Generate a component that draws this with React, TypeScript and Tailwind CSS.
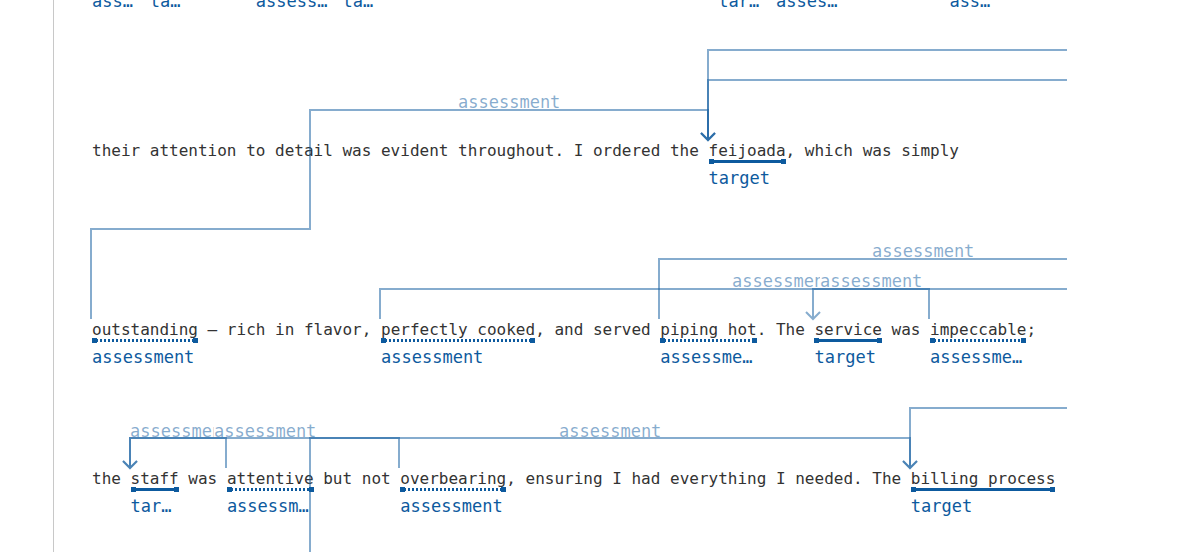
import React from 'react'

type Kind = 'target' | 'assessment'
type Span = { at: number; len: number; kind: Kind }

// text rows, span offsets are in characters of the monospaced line
const ROWS: { text: string; spans: Span[]; gap: string }[] = [
  {
    // line above the fold, only its labels show
    text: ' '.repeat(94),
    gap: '-mt-[36px]',
    spans: [
      { at: 0, len: 5, kind: 'assessment' },
      { at: 6, len: 4, kind: 'target' },
      { at: 17, len: 8, kind: 'assessment' },
      { at: 26, len: 4, kind: 'target' },
      { at: 65, len: 5, kind: 'target' },
      { at: 71, len: 7, kind: 'assessment' },
      { at: 89, len: 5, kind: 'assessment' },
    ],
  },
  {
    text: 'their attention to detail was evident throughout. I ordered the feijoada, which was simply',
    gap: 'mt-[127px]',
    spans: [{ at: 64, len: 8, kind: 'target' }],
  },
  {
    text: 'outstanding — rich in flavor, perfectly cooked, and served piping hot. The service was impeccable;',
    gap: 'mt-[129px]',
    spans: [
      { at: 0, len: 11, kind: 'assessment' },
      { at: 30, len: 16, kind: 'assessment' },
      { at: 59, len: 10, kind: 'assessment' },
      { at: 75, len: 7, kind: 'target' },
      { at: 87, len: 10, kind: 'assessment' },
    ],
  },
  {
    text: 'the staff was attentive but not overbearing, ensuring I had everything I needed. The billing process',
    gap: 'mt-[99px]',
    spans: [
      { at: 4, len: 5, kind: 'target' },
      { at: 14, len: 9, kind: 'assessment' },
      { at: 32, len: 11, kind: 'assessment' },
      { at: 85, len: 15, kind: 'target' },
    ],
  },
]

// relation arcs, page coordinates
const ARCS: { d: string; tip?: [number, number] }[] = [
  { d: 'M1067 50H708V140', tip: [708, 140] },
  { d: 'M1067 80H708V140', tip: [708, 140] },
  { d: 'M91 319V229H310V110H708V140', tip: [708, 140] },
  { d: 'M659 319V259H1067' },
  { d: 'M380 319V289H1067' },
  { d: 'M929 319V289H813V319', tip: [813, 319] },
  { d: 'M226 468V438H130V468', tip: [130, 468] },
  { d: 'M399 468V438H130V468', tip: [130, 468] },
  { d: 'M310 552V438H910V468', tip: [910, 468] },
  { d: 'M1067 408H910V468', tip: [910, 468] },
]

const ARC_LABELS: [number, number][] = [
  [458, 108],
  [872, 257],
  [732, 287],
  [820, 287],
  [130, 437],
  [214, 437],
  [559, 437],
]

function Marked({ kind, children }: { kind: Kind; children: React.ReactNode }) {
  return (
    <span className="relative">
      {children}
      {kind === 'target' ? (
        <span className="absolute inset-x-0 top-[19px] h-[3px] bg-[#0d5a9e]" />
      ) : (
        <span className="absolute inset-x-0 top-[19px] h-[3px] bg-[repeating-linear-gradient(90deg,#0d5a9e_0_2px,transparent_2px_4px)]" />
      )}
      <span className="absolute left-0 top-[18px] size-[5px] bg-[#0d5a9e]" />
      <span className="absolute right-0 top-[18px] size-[5px] bg-[#0d5a9e]" />
      <span className="absolute left-0 top-[27px] max-w-full truncate text-[17px] leading-5 text-[#0d5a9e]">
        {kind}
      </span>
    </span>
  )
}

function Line({ text, spans }: { text: string; spans: Span[] }) {
  const parts: React.ReactNode[] = []
  let pos = 0
  spans.forEach((s) => {
    parts.push(text.slice(pos, s.at))
    parts.push(
      <Marked key={s.at} kind={s.kind}>
        {text.slice(s.at, s.at + s.len)}
      </Marked>
    )
    pos = s.at + s.len
  })
  parts.push(text.slice(pos))
  return <div className="h-5 whitespace-pre text-base leading-5 text-[#333]">{parts}</div>
}

function Arcs() {
  return (
    <svg className="pointer-events-none absolute inset-0" width="1182" height="552">
      <g fill="none" stroke="#0d5a9e" strokeOpacity={0.5} strokeWidth={2}>
        {ARCS.map((a, i) => {
          const arrow = a.tip
            ? `M${a.tip[0] - 7} ${a.tip[1] - 7}L${a.tip[0]} ${a.tip[1]}L${a.tip[0] + 7} ${a.tip[1] - 7}`
            : ''
          return <path key={i} d={a.d + arrow} />
        })}
      </g>
      {ARC_LABELS.map(([x, y], i) => (
        <g key={i}>
          <rect x={x} y={y - 13} width={103} height={13} fill="#fff" />
          <text
            x={x}
            y={y}
            fill="#0d5a9e"
            fillOpacity={0.5}
            fontSize={17}
            fontFamily="'DejaVu Sans Mono', monospace"
          >
            assessment
          </text>
        </g>
      ))}
    </svg>
  )
}

export default function App() {
  return (
    <div className="relative flex h-[552px] w-full overflow-hidden bg-white font-['DejaVu_Sans_Mono',monospace]">
      <div className="w-[54px] shrink-0 border-r border-[#c8c8c8]" />
      <div className="flex flex-1 flex-col pl-[38px]">
        {ROWS.map((row, i) => (
          <div key={i} className={`pb-[30px] ${row.gap}`}>
            <Line text={row.text} spans={row.spans} />
          </div>
        ))}
      </div>
      <Arcs />
    </div>
  )
}
